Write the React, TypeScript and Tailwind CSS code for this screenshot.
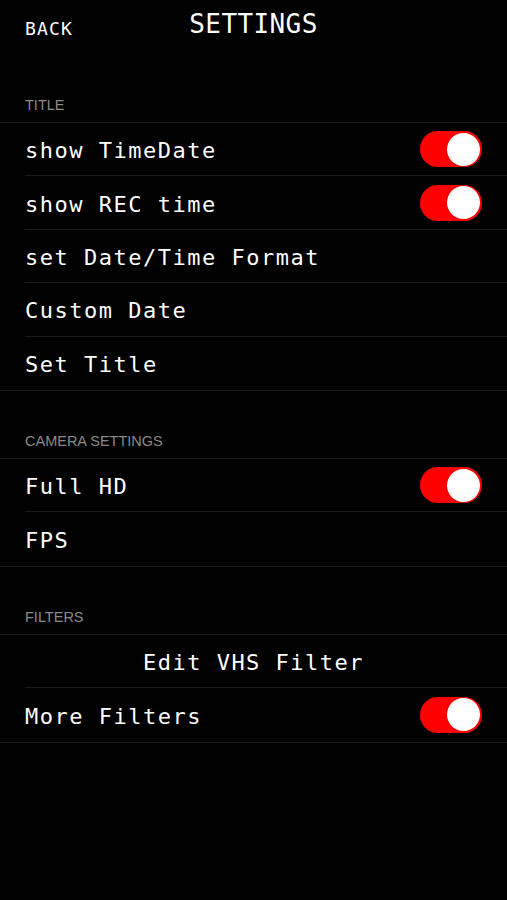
import React from 'react';

const mono = { fontFamily: '"DejaVu Sans Mono", "Liberation Mono", monospace' };

type Row = { label: string; toggle?: boolean; center?: boolean };

const sections: { title: string; rows: Row[] }[] = [
  {
    title: 'TITLE',
    rows: [
      { label: 'show TimeDate', toggle: true },
      { label: 'show REC time', toggle: true },
      { label: 'set Date/Time Format' },
      { label: 'Custom Date' },
      { label: 'Set Title' },
    ],
  },
  {
    title: 'CAMERA SETTINGS',
    rows: [{ label: 'Full HD', toggle: true }, { label: 'FPS' }],
  },
  {
    title: 'FILTERS',
    rows: [{ label: 'Edit VHS Filter', center: true }, { label: 'More Filters', toggle: true }],
  },
];

const Toggle = () => (
  <div className="w-[62px] h-[36px] rounded-full bg-[#fe0000] flex items-center justify-end pr-[2px] shrink-0">
    <div className="w-[33px] h-[33px] rounded-full bg-white" />
  </div>
);

export default function App() {
  return (
    <div className="w-[507px] h-[900px] bg-black text-white overflow-hidden">
      {/* nav */}
      <div className="h-[52px] grid grid-cols-[1fr_auto_1fr] items-center px-[25px]">
        <span className="text-[18px] tracking-[1.2px] pt-[4px]" style={mono}>BACK</span>
        <span className="text-[26px] tracking-[0.4px] -mt-[3px]" style={mono}>SETTINGS</span>
        <span />
      </div>

      {sections.map((s, i) => (
        <div key={s.title}>
          <div
            className={`${i === 0 ? 'h-[70px]' : 'h-[67px]'} flex items-end pb-[5px] px-[25px] text-[14.5px] text-[#8a8a8a]`}
            style={{ fontFamily: '"Liberation Sans", Arial, sans-serif' }}
          >
            {s.title}
          </div>
          <div className="border-t border-b border-[#1a1a1a]">
            {s.rows.map((r, j) => (
              <div key={r.label} className="pl-[25px]">
                <div
                  className={`h-[53.4px] flex items-center pr-[25px] ${j < s.rows.length - 1 ? 'border-b border-[#1a1a1a]' : ''} ${r.center ? 'justify-center' : 'justify-between'}`}
                >
                  <span className="text-[22px] tracking-[1.5px] pt-[3px]" style={mono}>{r.label}</span>
                  {r.toggle && <Toggle />}
                </div>
              </div>
            ))}
          </div>
        </div>
      ))}
    </div>
  );
}
